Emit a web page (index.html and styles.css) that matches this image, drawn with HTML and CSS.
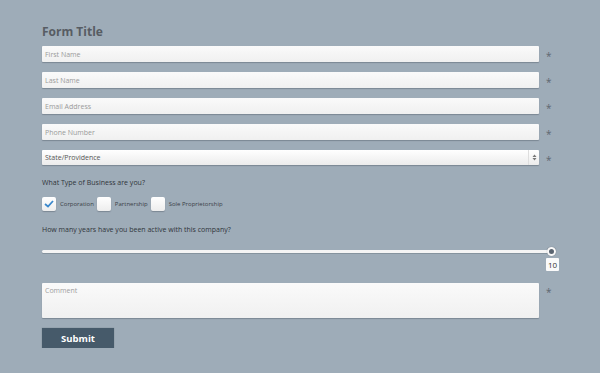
FILE: index.html
```html
<!DOCTYPE html>
<html lang="en">
<head>
    <meta charset="UTF-8">
    <meta name="viewport" content="width=device-width, initial-scale=1.0">
    <title>Form</title>
    <link rel="stylesheet" href="styles.css">
</head>
<body>
    <form class="form">
        <h1>Form Title</h1>

        <div class="row">
            <input type="text" class="field" placeholder="First Name">
            <span class="req">*</span>
        </div>
        <div class="row">
            <input type="text" class="field" placeholder="Last Name">
            <span class="req">*</span>
        </div>
        <div class="row">
            <input type="text" class="field" placeholder="Email Address">
            <span class="req">*</span>
        </div>
        <div class="row">
            <input type="text" class="field" placeholder="Phone Number">
            <span class="req">*</span>
        </div>
        <div class="row">
            <div class="field select">
                <span>State/Providence</span>
                <span class="select-arrow">
                    <svg width="5" height="7" viewBox="0 0 5 7">
                        <path d="M0.5 3 L2.5 0.5 L4.5 3 Z M0.5 4 L2.5 6.5 L4.5 4 Z" fill="#777"/>
                    </svg>
                </span>
            </div>
            <span class="req">*</span>
        </div>

        <p class="question">What Type of Business are you?</p>
        <div class="checks">
            <label class="check">
                <span class="box">
                    <svg width="10" height="8" viewBox="0 0 10 8">
                        <path d="M1 4 L4 6.5 L9 1" fill="none" stroke="#3b88cc" stroke-width="1.8"/>
                    </svg>
                </span>
                Corporation
            </label>
            <label class="check"><span class="box"></span>Partnership</label>
            <label class="check"><span class="box"></span>Sole Proprietorship</label>
        </div>

        <p class="question second">How many years have you been active with this company?</p>
        <div class="slider">
            <div class="track"></div>
            <div class="handle"></div>
            <div class="slider-value">10</div>
        </div>

        <div class="row comment-row">
            <div class="field comment">Comment</div>
            <span class="req">*</span>
        </div>

        <button type="button" class="submit">Submit</button>
    </form>
</body>
</html>
```

FILE: styles.css
```css
/* page */
body {
    margin: 0;
    background-color: #9eacb8;
    font-family: "Open Sans", Arial, sans-serif;
}

.form {
    padding: 23px 0 0 42px;
}

h1 {
    margin: 0 0 5px;
    font-size: 12px;
    line-height: 18px;
    color: #575c63;
    font-weight: 700;
}

.row {
    display: flex;
    align-items: center;
    margin-bottom: 10px;
}

.field {
    box-sizing: border-box;
    width: 497px;
    height: 16px;
    border: none;
    border-radius: 1px;
    padding: 0 3px;
    background: linear-gradient(#fafafa, #f0f0f0);
    box-shadow: 0 1px 1px rgba(60, 70, 80, 0.35);
    font-family: "Open Sans", Arial, sans-serif;
    font-size: 7px;
    color: #444;
    outline: none;
}

.field::placeholder {
    color: #9a9a9a;
}

.req {
    margin-left: 7px;
    margin-top: 4px;
    font-size: 10px;
    line-height: 10px;
    color: #5d6670;
}

.select {
    display: flex;
    align-items: center;
    justify-content: space-between;
    height: 15px;
    padding-right: 0;
    color: #555;
    background: linear-gradient(#ffffff, #ececec);
}

.select-arrow {
    display: flex;
    align-items: center;
    justify-content: center;
    width: 10px;
    height: 15px;
    border-left: 1px solid #dedede;
}

.question {
    margin: 12px 0 0;
    font-size: 7px;
    line-height: 12px;
    color: #30353a;
}

.question.second {
    margin-top: 13px;
}

.checks {
    display: flex;
    align-items: center;
    margin-top: 8px;
}

.check {
    display: flex;
    align-items: center;
    margin-right: 3px;
    font-size: 6px;
    color: #3a4046;
}

.box {
    display: flex;
    align-items: center;
    justify-content: center;
    width: 14px;
    height: 14px;
    margin-right: 4px;
    background: linear-gradient(#ffffff, #ededed);
    border-radius: 2px;
    box-shadow: 0 1px 1px rgba(60, 70, 80, 0.35);
}

.slider {
    position: relative;
    width: 510px;
    height: 10px;
    margin-top: 10px;
    margin-bottom: 27px;
}

.track {
    position: absolute;
    left: 0;
    right: 0;
    top: 4px;
    height: 3px;
    background: #f4f4f4;
    border-radius: 2px;
    box-shadow: 0 1px 0 rgba(60, 70, 80, 0.25);
}

.handle {
    position: absolute;
    right: -4px;
    top: 1px;
    width: 5px;
    height: 5px;
    border-radius: 50%;
    background: #5a6470;
    border: 2px solid #fafafa;
    box-shadow: 0 0 1px rgba(0, 0, 0, 0.4);
}

.slider-value {
    position: absolute;
    right: -7px;
    top: 12px;
    width: 13px;
    height: 13px;
    background: #fafafa;
    border-radius: 1px;
    font-size: 8px;
    line-height: 13px;
    text-align: center;
    color: #333;
}

.comment-row {
    align-items: flex-start;
}

.comment {
    height: 35px;
    padding-top: 3px;
    line-height: 10px;
    color: #a0a0a0;
}

.comment-row .req {
    margin-top: 4px;
}

.submit {
    display: block;
    width: 72px;
    height: 20px;
    border: none;
    background-color: #465a6a;
    color: #fff;
    font-family: "Open Sans", Arial, sans-serif;
    font-weight: 700;
    font-size: 9.5px;
    cursor: pointer;
    box-shadow: 0 0 1px rgba(0, 0, 0, 0.3);
}
```
